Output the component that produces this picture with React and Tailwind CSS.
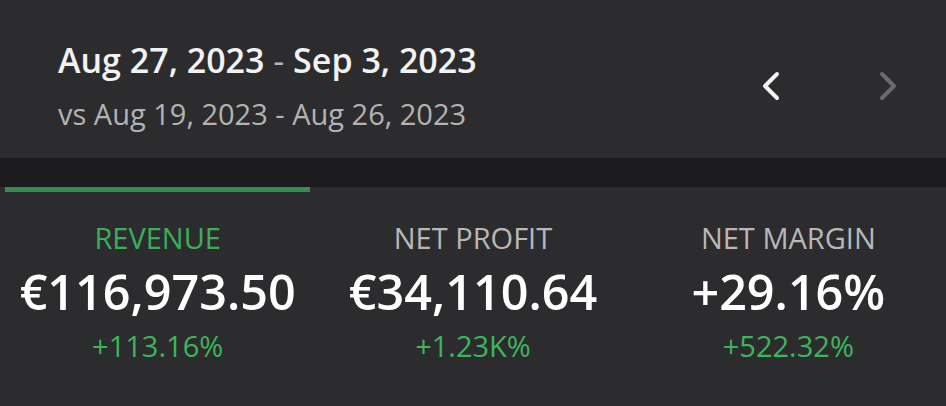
const stats = [
  { label: 'REVENUE', value: '€116,973.50', change: '+113.16%', active: true },
  { label: 'NET PROFIT', value: '€34,110.64', change: '+1.23K%' },
  { label: 'NET MARGIN', value: '+29.16%', change: '+522.32%' },
]

function Chevron({ dir = 'left', className }) {
  return (
    <svg width="22" height="32" viewBox="0 0 22 32" fill="none" className={className}>
      <path
        d={dir === 'left' ? 'M17 4 L5 16 L17 28' : 'M5 4 L17 16 L5 28'}
        stroke="currentColor"
        strokeWidth="4"
        strokeLinecap="round"
        strokeLinejoin="round"
      />
    </svg>
  )
}

export default function App() {
  return (
    <div className="w-[946px] h-[406px] bg-[#2c2c2e] font-['Open_Sans',sans-serif] overflow-hidden">
      {/* Date range header */}
      <div className="h-[158px] flex items-start justify-between pl-[58px] pt-[38px]">
        <div>
          <div className="text-[34px] leading-[44px] font-semibold text-[#f2f2f2]">
            Aug 27, 2023 <span className="font-normal text-[#b5b5b5]">-</span> Sep 3, 2023
          </div>
          <div className="mt-[13px] text-[29px] leading-[38px] text-[#b3b3b3]">
            vs Aug 19, 2023 - Aug 26, 2023
          </div>
        </div>
        <div className="flex items-center gap-[95px] mt-[32px] mr-[47px]">
          <Chevron dir="left" className="text-[#f4f4f4]" />
          <Chevron dir="right" className="text-[#6b6b6d]" />
        </div>
      </div>

      <div className="h-[29px] bg-[#1c1c1e]" />

      {/* Tab indicator */}
      <div className="grid grid-cols-3 h-[5px]">
        <div className="ml-[5px] mr-[5px] h-[5px] bg-[#388a4e]" />
      </div>

      {/* Stats */}
      <div className="grid grid-cols-3 pt-[27px]">
        {stats.map((s) => (
          <div key={s.label} className="flex flex-col items-center">
            <div
              className={`text-[29px] leading-[38px] ${s.active ? 'text-[#3cae5a]' : 'text-[#b8b8b8]'}`}
            >
              {s.label}
            </div>
            <div className="mt-[4px] text-[48.5px] leading-[60px] font-semibold text-white">
              {s.value}
            </div>
            <div className="mt-[7px] text-[29px] leading-[36px] text-[#3cb55c]">{s.change}</div>
          </div>
        ))}
      </div>
    </div>
  )
}
